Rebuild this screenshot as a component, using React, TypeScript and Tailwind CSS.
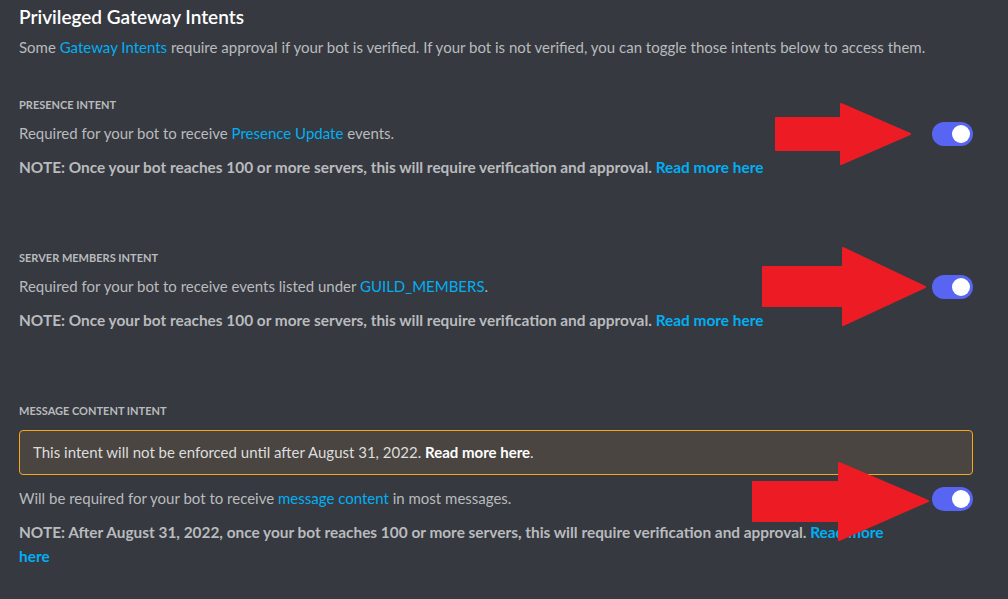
import React from "react";

const Toggle = () => (
  <div className="mt-px flex h-6 w-[41px] shrink-0 items-center justify-end rounded-full bg-[#5865f2] pr-[3px]">
    <div className="h-[18px] w-[18px] rounded-full bg-white" />
  </div>
);

const Link = ({ children }: { children: React.ReactNode }) => (
  <span className="text-[#00aff4]">{children}</span>
);

const Label = ({ children }: { children: React.ReactNode }) => (
  <div className="text-[11px] font-bold uppercase leading-4 text-[#b9bbbe]">{children}</div>
);

const Arrow = ({ rx, ry1, ry2, hx, hy1, hy2, tx, ty }: { rx: number; ry1: number; ry2: number; hx: number; hy1: number; hy2: number; tx: number; ty: number }) => (
  <polygon
    points={`${rx},${ry1} ${hx},${ry1} ${hx},${hy1} ${tx},${ty} ${hx},${hy2} ${hx},${ry2} ${rx},${ry2}`}
    fill="#ed1c24"
    stroke="#ed1c24"
    strokeWidth="2"
    strokeLinejoin="round"
  />
);

export default function App() {
  return (
    <div
      className="relative h-[599px] w-[1008px] overflow-hidden bg-[#36393f] px-[19px] pt-[5px] text-[#b9bbbe]"
      style={{ fontFamily: "Lato, 'Noto Sans', sans-serif" }}
    >
      <div className="w-[954px]">
        <h2 className="text-[19px] font-semibold leading-6 text-white">Privileged Gateway Intents</h2>
        <p className="mt-[6px] text-[15px] leading-6">
          Some <Link>Gateway Intents</Link> require approval if your bot is verified. If your bot is not verified, you can toggle those intents below to access them.
        </p>

        {/* Presence */}
        <div className="mt-[38px]">
          <Label>Presence Intent</Label>
          <div className="mt-2 flex gap-6">
            <div className="flex-1">
              <p className="text-[15px] leading-6">
                Required for your bot to receive <Link>Presence Update</Link> events.
              </p>
              <p className="mt-[10px] text-[15.4px] font-bold leading-6">
                NOTE: Once your bot reaches 100 or more servers, this will require verification and approval. <Link>Read more here</Link>
              </p>
            </div>
            <Toggle />
          </div>
        </div>

        {/* Server members */}
        <div className="mt-[71px]">
          <Label>Server Members Intent</Label>
          <div className="mt-2 flex gap-6">
            <div className="flex-1">
              <p className="text-[15px] leading-6">
                Required for your bot to receive events listed under <Link>GUILD_MEMBERS</Link>.
              </p>
              <p className="mt-[10px] text-[15.4px] font-bold leading-6">
                NOTE: Once your bot reaches 100 or more servers, this will require verification and approval. <Link>Read more here</Link>
              </p>
            </div>
            <Toggle />
          </div>
        </div>

        {/* Message content */}
        <div className="mt-[71px]">
          <Label>Message Content Intent</Label>
          <div className="mt-[11px] flex h-[45px] items-center rounded-[4px] border border-[#faa61a] bg-[#4a4540] px-[13px] text-[15px] text-[#dcddde]">
            <span>
              This intent will not be enforced until after August 31, 2022. <b className="font-bold text-white">Read more here</b>.
            </span>
          </div>
          <div className="mt-[11px] flex gap-6">
            <div className="flex-1">
              <p className="text-[15px] leading-6">
                Will be required for your bot to receive <Link>message content</Link> in most messages.
              </p>
              <p className="mt-[10px] text-[15.4px] font-bold leading-6">
                NOTE: After August 31, 2022, once your bot reaches 100 or more servers, this will require verification and approval. <Link>Read more here</Link>
              </p>
            </div>
            <Toggle />
          </div>
        </div>
      </div>

      <svg className="pointer-events-none absolute left-0 top-0" width="1008" height="599" viewBox="0 0 1008 599">
        <Arrow rx={776} ry1={118} ry2={150} hx={841} hy1={104} hy2={164} tx={910} ty={134} />
        <Arrow rx={763} ry1={267} ry2={306} hx={843} hy1={248} hy2={325} tx={925} ty={287} />
        <Arrow rx={753} ry1={482} ry2={521} hx={839} hy1={463} hy2={540} tx={928} ty={501} />
      </svg>
    </div>
  );
}
